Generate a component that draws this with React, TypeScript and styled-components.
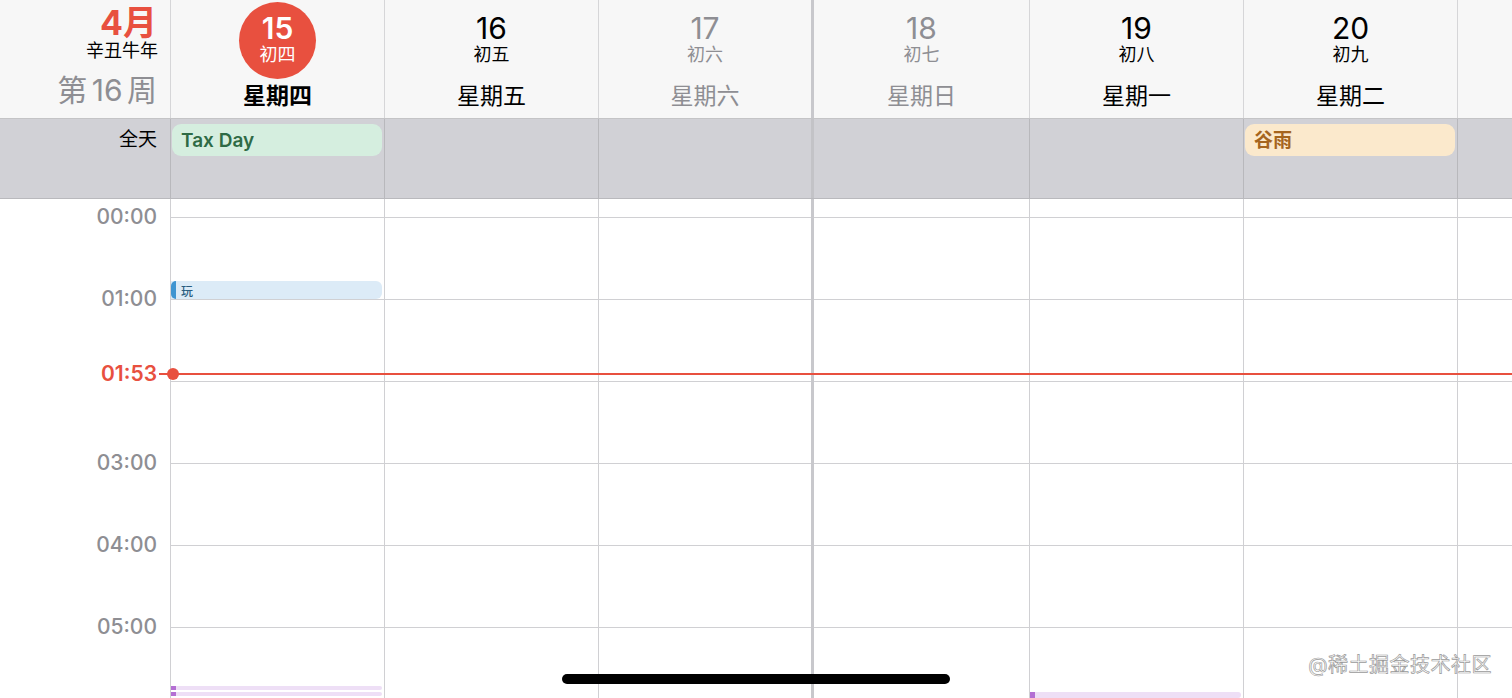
import React from 'react';
import styled, { createGlobalStyle } from 'styled-components';

const FONT = `"Inter", "Noto Sans CJK SC", sans-serif`;
const COLS = '170px 214px 214px 213px 218px 214px 214px 1fr';
const RED = '#e8503f';
const GRAY = '#8e8e93';
const LINE = '#d0d0d3';
const HOUR = 82;

const GlobalStyle = createGlobalStyle`
    html, body {
        margin: 0;
        padding: 0;
        background: #ffffff;
        font-family: ${FONT};
        overflow: hidden;
    }
`;

type Day = {
    date: string;
    lunar: string;
    week: string;
    today?: boolean;
    weekend?: boolean;
    thick?: boolean;
};

const days: Day[] = [
    { date: '15', lunar: '初四', week: '星期四', today: true },
    { date: '16', lunar: '初五', week: '星期五' },
    { date: '17', lunar: '初六', week: '星期六', weekend: true },
    { date: '18', lunar: '初七', week: '星期日', weekend: true, thick: true },
    { date: '19', lunar: '初八', week: '星期一' },
    { date: '20', lunar: '初九', week: '星期二' },
];

// 02:00 is hidden behind the current-time label
const labels = ['00:00', '01:00', '02:00', '03:00', '04:00', '05:00'];
const slots = [0, 1, 2, 3, 4, 5, 6];

const App = () => {
    return (
        <Screen>
            <GlobalStyle />
            <HeaderRow>
                <MonthCell>
                    <Month>4月</Month>
                    <YearName>辛丑牛年</YearName>
                    <WeekNo>第 16 周</WeekNo>
                </MonthCell>
                {days.map((d) => (
                    <DayHead key={d.date} $thick={d.thick}>
                        <DateBadge $today={d.today} $muted={d.weekend}>
                            <DateNum $today={d.today}>{d.date}</DateNum>
                            <Lunar>{d.lunar}</Lunar>
                        </DateBadge>
                        <WeekDay $today={d.today} $muted={d.weekend}>{d.week}</WeekDay>
                    </DayHead>
                ))}
                <DayHead />
            </HeaderRow>

            <AllDayRow>
                <AllDayLabel>全天</AllDayLabel>
                {days.map((d) => (
                    <AllDayCell key={d.date} $thick={d.thick}>
                        {d.date === '15' && <AllDayEvent $kind="green">Tax Day</AllDayEvent>}
                        {d.date === '20' && <AllDayEvent $kind="orange">谷雨</AllDayEvent>}
                    </AllDayCell>
                ))}
                <AllDayCell />
            </AllDayRow>

            <Body>
                <Gutter>
                    {labels.map((h) => (
                        <TimeLabel key={h} $hidden={h === '02:00'}>{h}</TimeLabel>
                    ))}
                </Gutter>
                {days.map((d) => (
                    <DayColumn key={d.date} $thick={d.thick}>
                        {slots.map((s) => <HourSlot key={s} />)}
                        {d.date === '15' && (
                            <>
                                <TimedEvent $color="blue" $top={100 - 18} $height={18}>
                                    <EventText>玩</EventText>
                                </TimedEvent>
                                <TimedEvent $color="purple" $top={487} $height={4} />
                                <TimedEvent $color="purple" $top={493} $height={4} />
                            </>
                        )}
                        {d.date === '19' && <TimedEvent $color="purple" $top={493} $height={6} />}
                    </DayColumn>
                ))}
                <DayColumn>
                    {slots.map((s) => <HourSlot key={s} />)}
                </DayColumn>

                <NowLine>
                    <NowLabel>01:53</NowLabel>
                    <NowTrack>
                        <NowDot />
                    </NowTrack>
                </NowLine>
            </Body>

            <Watermark>@稀土掘金技术社区</Watermark>
            <HomeBar />
        </Screen>
    );
};

export default App;

const Screen = styled.div`
    position: relative;
    width: 1512px;
    height: 698px;
    overflow: hidden;
    display: flex;
    flex-direction: column;
    color: #000;
`;

const HeaderRow = styled.div`
    display: grid;
    grid-template-columns: ${COLS};
    height: 118px;
    background: #f7f7f7;
    border-bottom: 1px solid #c4c4c6;
`;

const MonthCell = styled.div`
    display: flex;
    flex-direction: column;
    align-items: flex-end;
    padding-right: 13px;
`;

const Month = styled.div`
    margin-top: 4px;
    font-size: 34px;
    line-height: 37px;
    font-weight: 700;
    color: ${RED};
`;

const YearName = styled.div`
    font-size: 18px;
    line-height: 20px;
    margin-right: -1px;
`;

const WeekNo = styled.div`
    margin-top: 13px;
    font-size: 30px;
    line-height: 32px;
    font-weight: 400;
    color: ${GRAY};
    word-spacing: -4px;
`;

const DayHead = styled.div<{ $thick?: boolean }>`
    display: flex;
    flex-direction: column;
    align-items: center;
    padding-top: 2px;
    border-left: ${(p) => (p.$thick ? '3px solid #c8c8cc' : '1px solid #d6d6d8')};
`;

const DateBadge = styled.div<{ $today?: boolean; $muted?: boolean }>`
    width: 77px;
    height: 77px;
    border-radius: 50%;
    display: flex;
    flex-direction: column;
    align-items: center;
    justify-content: center;
    padding-bottom: 5px;
    box-sizing: border-box;
    background: ${(p) => (p.$today ? RED : 'transparent')};
    color: ${(p) => (p.$today ? '#ffffff' : p.$muted ? GRAY : '#000000')};
`;

const DateNum = styled.div<{ $today?: boolean }>`
    font-size: 30px;
    line-height: 32px;
    font-weight: ${(p) => (p.$today ? 600 : 400)};
`;

const Lunar = styled.div`
    font-size: 18px;
    line-height: 21px;
`;

const WeekDay = styled.div<{ $today?: boolean; $muted?: boolean }>`
    margin-top: 3px;
    font-size: 23px;
    line-height: 28px;
    font-weight: ${(p) => (p.$today ? 700 : 400)};
    color: ${(p) => (p.$muted ? GRAY : '#000000')};
`;

const AllDayRow = styled.div`
    display: grid;
    grid-template-columns: ${COLS};
    height: 79px;
    background: #d1d1d6;
    border-bottom: 1px solid #b9b9bd;
`;

const AllDayLabel = styled.div`
    text-align: right;
    padding-right: 13px;
    padding-top: 8px;
    font-size: 19px;
    line-height: 26px;
`;

const AllDayCell = styled.div<{ $thick?: boolean }>`
    padding: 5px 2px 0 1px;
    border-left: ${(p) => (p.$thick ? '3px solid #c3c3c7' : '1px solid #b8b8bc')};
`;

const AllDayEvent = styled.div<{ $kind: 'green' | 'orange' }>`
    height: 32px;
    border-radius: 9px;
    padding-left: 9px;
    font-size: 19px;
    line-height: 33px;
    font-weight: 600;
    background: ${(p) => (p.$kind === 'green' ? '#d5eedf' : '#fbe9cc')};
    color: ${(p) => (p.$kind === 'green' ? '#2e6a45' : '#a5651e')};
`;

const Body = styled.div`
    position: relative;
    flex: 1;
    display: grid;
    grid-template-columns: ${COLS};
    overflow: hidden;
`;

const Gutter = styled.div`
    padding-top: 8px;
    padding-right: 13px;
    display: flex;
    flex-direction: column;
    align-items: flex-end;
`;

const TimeLabel = styled.div<{ $hidden?: boolean }>`
    height: ${HOUR}px;
    flex-shrink: 0;
    font-size: 21px;
    line-height: 20px;
    font-weight: 500;
    color: ${GRAY};
    visibility: ${(p) => (p.$hidden ? 'hidden' : 'visible')};
`;

const DayColumn = styled.div<{ $thick?: boolean }>`
    position: relative;
    padding-top: 18px;
    border-left: ${(p) => (p.$thick ? '3px solid #c8c8cc' : `1px solid ${LINE}`)};
`;

const HourSlot = styled.div`
    height: ${HOUR}px;
    border-top: 1px solid ${LINE};
    box-sizing: border-box;
`;

const TimedEvent = styled.div<{ $color: 'blue' | 'purple'; $top: number; $height: number }>`
    position: absolute;
    left: 0;
    right: 2px;
    top: ${(p) => p.$top}px;
    height: ${(p) => p.$height}px;
    border-radius: 0 6px 6px 0;
    background: ${(p) => (p.$color === 'blue' ? '#dcebf7' : '#eedff6')};
    display: flex;
    align-items: center;

    &::before {
        content: '';
        position: absolute;
        left: 0;
        top: 0;
        bottom: 0;
        width: 5px;
        border-radius: ${(p) => (p.$color === 'blue' ? '9px 0 0 9px' : '0')};
        background: ${(p) => (p.$color === 'blue' ? '#3f95d1' : '#b46fd3')};
    }
`;

const EventText = styled.span`
    margin-left: 10px;
    font-size: 12px;
    font-weight: 500;
    color: #2b5d80;
`;

const NowLine = styled.div`
    position: absolute;
    top: 165px;
    left: 0;
    right: 0;
    height: 20px;
    display: flex;
    align-items: center;
`;

const NowLabel = styled.div`
    width: 157px;
    text-align: right;
    font-size: 21px;
    line-height: 20px;
    font-weight: 600;
    color: ${RED};
`;

const NowTrack = styled.div`
    position: relative;
    flex: 1;
    margin-left: 2px;
    height: 2px;
    background: ${RED};
`;

const NowDot = styled.div`
    position: absolute;
    left: 8px;
    top: -5px;
    width: 12px;
    height: 12px;
    border-radius: 50%;
    background: ${RED};
`;

const Watermark = styled.div`
    position: absolute;
    right: 20px;
    bottom: 21px;
    font-size: 20px;
    line-height: 24px;
    letter-spacing: 0.5px;
    color: rgba(255, 255, 255, 0.85);
    -webkit-text-stroke: 0.7px #9a9a9a;
`;

const HomeBar = styled.div`
    position: absolute;
    left: 50%;
    bottom: 14px;
    width: 388px;
    height: 10px;
    margin-left: -194px;
    border-radius: 5px;
    background: #000;
`;
